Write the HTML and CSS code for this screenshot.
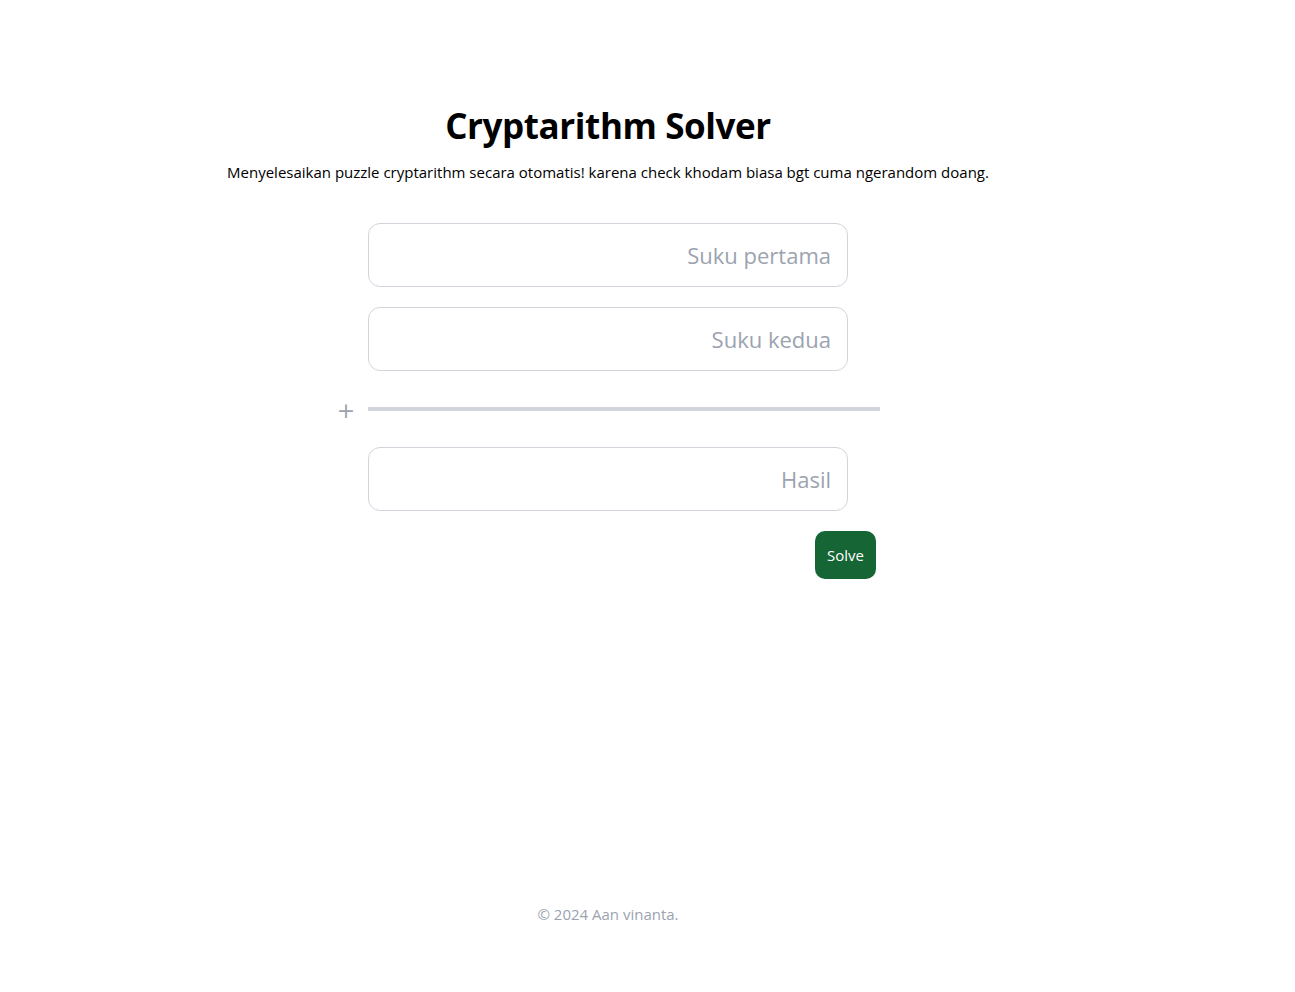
FILE: index.html
```html
<!DOCTYPE html>
<html lang="id">
<head>
<meta charset="utf-8">
<title>Cryptarithm Solver</title>
<link rel="stylesheet" href="styles.css">
</head>
<body>
<div class="page">
  <main class="main">
    <h1 class="title">Cryptarithm Solver</h1>
    <p class="subtitle">Menyelesaikan puzzle cryptarithm secara otomatis! karena check khodam biasa bgt cuma ngerandom doang.</p>
    <form class="form">
      <input class="field" type="text" placeholder="Suku pertama">
      <input class="field" type="text" placeholder="Suku kedua">
      <div class="sum-row">
        <span class="plus">+</span>
        <div class="rule"></div>
      </div>
      <input class="field" type="text" placeholder="Hasil">
      <div class="actions">
        <button class="solve" type="button">Solve</button>
      </div>
    </form>
  </main>
  <footer class="footer">© 2024 Aan vinanta.</footer>
</div>
</body>
</html>
```

FILE: styles.css
```css
html, body {
  margin: 0;
  padding: 0;
  background: #ffffff;
}
body {
  padding: 0 8px;
  font-family: "Open Sans", "Noto Sans", sans-serif;
  color: #000;
}
.page {
  width: 1200px;
  min-height: 992px;
  display: flex;
  flex-direction: column;
}
.main {
  display: flex;
  flex-direction: column;
  align-items: center;
  padding-top: 106px;
}
.title {
  margin: 0;
  font-size: 35px;
  line-height: 40px;
  font-weight: 700;
  letter-spacing: -0.4px;
}
.subtitle {
  margin: 14px 0 0;
  font-size: 15px;
  line-height: 24px;
}
.form {
  margin-top: 39px;
  width: 480px;
  display: flex;
  flex-direction: column;
  gap: 20px;
}
.field {
  box-sizing: border-box;
  width: 480px;
  height: 64px;
  border: 1px solid #d1d5db;
  border-radius: 12px;
  padding: 0 16px;
  font-family: inherit;
  font-size: 22px;
  text-align: right;
  color: #111;
  outline: none;
  background: #fff;
}
.field::placeholder {
  color: #9ca3af;
}
.sum-row {
  position: relative;
  width: 512px;
  height: 36px;
  display: flex;
  align-items: center;
}
.plus {
  position: absolute;
  left: -34px;
  top: 8px;
  width: 24px;
  text-align: center;
  font-family: "DejaVu Sans", sans-serif;
  font-size: 22px;
  line-height: 24px;
  font-weight: 400;
  color: #9ca3af;
}
.rule {
  width: 100%;
  height: 4px;
  background: #d1d5db;
}
.actions {
  width: 508px;
  display: flex;
  justify-content: flex-end;
}
.solve {
  height: 48px;
  padding: 0 12px;
  border: none;
  border-radius: 10px;
  background: #166534;
  color: #fff;
  font-family: inherit;
  font-size: 15px;
  cursor: pointer;
}
.footer {
  margin-top: auto;
  padding-bottom: 68px;
  text-align: center;
  font-size: 15px;
  color: #9ca3af;
}
```
